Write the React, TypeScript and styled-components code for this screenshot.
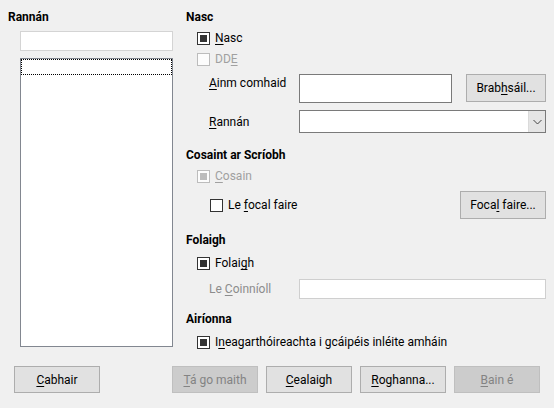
import React from "react";
import styled, { createGlobalStyle } from "styled-components";

const Global = createGlobalStyle`
  html, body { margin: 0; padding: 0; background: #f0f0f0; }
  body { font-family: Roboto, "Noto Sans", sans-serif; font-size: 12px; color: #000; }
  u { text-decoration: underline; text-underline-offset: 2px; text-decoration-thickness: 1px; }
`;

const Page = styled.div`
  width: 554px;
  height: 408px;
  background: #f0f0f0;
  display: flex;
  flex-direction: column;
  overflow: hidden;
`;

const Main = styled.div`
  display: flex;
  padding: 9px 8px 0 8px;
  height: 352px;
  box-sizing: border-box;
`;

const LeftCol = styled.div`
  width: 178px;
  display: flex;
  flex-direction: column;
`;

const RightCol = styled.div`
  width: 360px;
  display: flex;
  flex-direction: column;
`;

const Title = styled.div<{ $mt?: number }>`
  font-weight: 700;
  height: 16px;
  line-height: 16px;
  margin-top: ${(p) => p.$mt ?? 0}px;
  white-space: nowrap;
`;

const SearchInput = styled.div`
  margin: 6px 0 0 12px;
  width: 153px;
  height: 20px;
  box-sizing: border-box;
  background: #fff;
  border: 1px solid #d4d4d4;
`;

const ListBox = styled.div`
  margin: 7px 0 0 12px;
  width: 153px;
  height: 289px;
  box-sizing: border-box;
  background: #fff;
  border: 1px solid #828790;
`;

const FocusRow = styled.div`
  height: 16px;
  box-sizing: border-box;
  border: 1px dotted #000;
`;

const Row = styled.div<{ $mt: number; $h: number; $indent: number; $top?: boolean }>`
  display: flex;
  align-items: ${(p) => (p.$top ? "flex-start" : "center")};
  height: ${(p) => p.$h}px;
  margin-top: ${(p) => p.$mt}px;
  padding-left: ${(p) => p.$indent}px;
`;

const Box = styled.span<{ $checked?: boolean; $disabled?: boolean }>`
  width: 13px;
  height: 13px;
  box-sizing: border-box;
  border: 1px solid ${(p) => (p.$disabled ? "#bcbcbc" : "#333")};
  background: ${(p) => (p.$disabled ? "#fcfcfc" : "#fff")};
  display: inline-flex;
  align-items: center;
  justify-content: center;
  flex: none;
  &::after {
    content: "";
    display: ${(p) => (p.$checked ? "block" : "none")};
    width: 7px;
    height: 7px;
    background: ${(p) => (p.$disabled ? "#bcbcbc" : "#333")};
  }
`;

const CheckText = styled.span<{ $disabled?: boolean }>`
  margin-left: 5px;
  line-height: 16px;
  white-space: nowrap;
  color: ${(p) => (p.$disabled ? "#a0a0a0" : "#000")};
`;

const Label = styled.span<{ $disabled?: boolean; $pt?: number }>`
  width: 90px;
  flex: none;
  line-height: 16px;
  padding-top: ${(p) => p.$pt ?? 0}px;
  white-space: nowrap;
  color: ${(p) => (p.$disabled ? "#8c8c8c" : "#000")};
`;

const TextField = styled.div<{ $w?: number; $h: number; $light?: boolean }>`
  ${(p) => (p.$w ? `width: ${p.$w}px;` : "flex: 1;")}
  height: ${(p) => p.$h}px;
  box-sizing: border-box;
  background: #fff;
  border: 1px solid ${(p) => (p.$light ? "#cfcfcf" : "#7a7a7a")};
`;

const Select = styled.div`
  flex: 1;
  height: 23px;
  box-sizing: border-box;
  background: #fff;
  border: 1px solid #7a7a7a;
  display: flex;
  justify-content: flex-end;
`;

const SelectArrow = styled.div`
  width: 16px;
  height: 100%;
  background: #e5e5e5;
  border-left: 1px solid #dadada;
  display: flex;
  align-items: center;
  justify-content: center;
`;

const Spacer = styled.div`
  flex: 1;
`;

const Button = styled.div<{ $w: number; $h?: number; $disabled?: boolean }>`
  width: ${(p) => p.$w}px;
  height: ${(p) => p.$h ?? 28}px;
  box-sizing: border-box;
  background: ${(p) => (p.$disabled ? "#cccccc" : "#e1e1e1")};
  border: 1px solid ${(p) => (p.$disabled ? "#bfbfbf" : "#adadad")};
  color: ${(p) => (p.$disabled ? "#838383" : "#000")};
  display: flex;
  align-items: center;
  justify-content: center;
  white-space: nowrap;
  flex: none;
`;

const ButtonText = styled.span`
  line-height: 16px;
`;

const Footer = styled.div`
  margin-top: 14px;
  padding: 0 14px;
  display: flex;
  justify-content: space-between;
`;

const ButtonGroup = styled.div`
  display: flex;
  gap: 8px;
`;

export default function App() {
  return (
    <Page>
      <Global />
      <Main>
        <LeftCol>
          <Title>Rannán</Title>
          <SearchInput />
          <ListBox>
            <FocusRow />
          </ListBox>
        </LeftCol>
        <RightCol>
          <Title>Nasc</Title>
          <Row $mt={3} $h={20} $indent={11}>
            <Box $checked />
            <CheckText><u>N</u>asc</CheckText>
          </Row>
          <Row $mt={1} $h={20} $indent={11}>
            <Box $disabled />
            <CheckText $disabled>DD<u>E</u></CheckText>
          </Row>
          <Row $mt={5} $h={29} $indent={23} $top>
            <Label $pt={1}><u>A</u>inm comhaid</Label>
            <TextField $w={153} $h={29} />
            <Spacer />
            <Button $w={80}><ButtonText>Brab<u>h</u>sáil...</ButtonText></Button>
          </Row>
          <Row $mt={7} $h={23} $indent={23}>
            <Label><u>R</u>annán</Label>
            <Select>
              <SelectArrow>
                <svg width="9" height="6" viewBox="0 0 9 6">
                  <path d="M0.5 1 L4.5 5 L8.5 1" fill="none" stroke="#444" strokeWidth="1" />
                </svg>
              </SelectArrow>
            </Select>
          </Row>
          <Title $mt={14}>Cosaint ar Scríobh</Title>
          <Row $mt={3} $h={20} $indent={11}>
            <Box $checked $disabled />
            <CheckText $disabled><u>C</u>osain</CheckText>
          </Row>
          <Row $mt={5} $h={28} $indent={24}>
            <Box />
            <CheckText>Le <u>f</u>ocal faire</CheckText>
            <Spacer />
            <Button $w={86}><ButtonText>Foca<u>l</u> faire...</ButtonText></Button>
          </Row>
          <Title $mt={13}>Folaigh</Title>
          <Row $mt={5} $h={20} $indent={11}>
            <Box $checked />
            <CheckText>Folai<u>g</u>h</CheckText>
          </Row>
          <Row $mt={6} $h={20} $indent={23}>
            <Label $disabled>Le <u>C</u>oinníoll</Label>
            <TextField $h={20} $light />
          </Row>
          <Title $mt={12}>Airíonna</Title>
          <Row $mt={5} $h={20} $indent={11}>
            <Box $checked />
            <CheckText>I<u>n</u>eagarthóireachta i gcáipéis inléite amháin</CheckText>
          </Row>
        </RightCol>
      </Main>
      <Footer>
        <Button $w={86} $h={27}><ButtonText><u>C</u>abhair</ButtonText></Button>
        <ButtonGroup>
          <Button $w={86} $h={27} $disabled><ButtonText><u>T</u>á go maith</ButtonText></Button>
          <Button $w={86} $h={27}><ButtonText><u>C</u>ealaigh</ButtonText></Button>
          <Button $w={86} $h={27}><ButtonText><u>R</u>oghanna...</ButtonText></Button>
          <Button $w={86} $h={27} $disabled><ButtonText><u>B</u>ain é</ButtonText></Button>
        </ButtonGroup>
      </Footer>
    </Page>
  );
}
